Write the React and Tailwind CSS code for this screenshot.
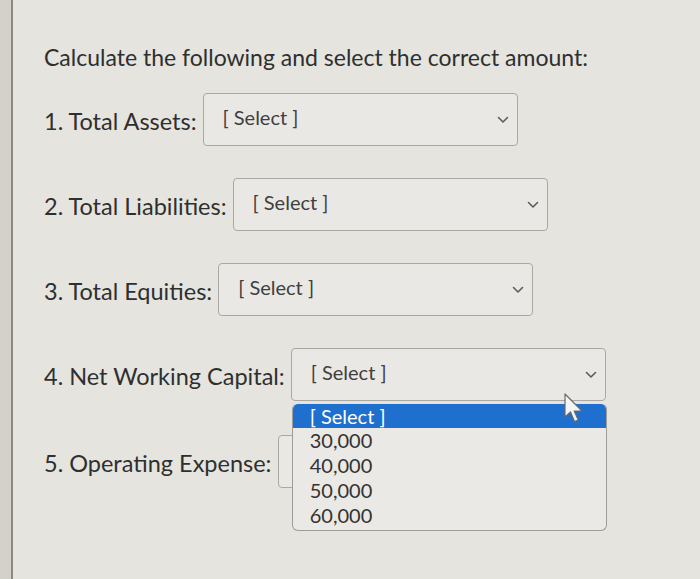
import React from "react";

const Chevron = () => (
  <svg width="12" height="8" viewBox="0 0 12 8" className="shrink-0">
    <path d="M1.5 1.5 L6 6 L10.5 1.5" fill="none" stroke="#5d5d5d" strokeWidth="1.6" strokeLinecap="round" strokeLinejoin="round" />
  </svg>
);

const SelectBox = ({ showText = true }) => (
  <div className="flex h-[53px] w-[315px] items-center justify-between rounded-[4px] border border-[#a9a8a3] bg-[#e9e8e4] pl-[19px] pr-[8px]">
    <span className="-mt-[5px] text-[20px] text-[#3f3f3f]">{showText ? "[ Select ]" : ""}</span>
    <Chevron />
  </div>
);

const Row = ({ label, children }) => (
  <div className="flex h-[53px] items-center">
    <span className="mt-[4px] text-[23.5px] text-[#2f2f2f]">{label}</span>
    <div className="relative ml-[6px]">{children}</div>
  </div>
);

export default function App() {
  return (
    <div
      className="flex h-[579px] w-[700px] overflow-hidden bg-[#e5e4df]"
      style={{ fontFamily: "Lato, 'Open Sans', sans-serif" }}
    >
      <div className="w-[11px] shrink-0 bg-[#d3d1ca]" />
      <div className="w-[2px] shrink-0 bg-[#898883]" />
      <div className="flex flex-col pl-[31px] pt-[43px]">
        <h1 className="text-[23px] leading-[28px] text-[#2f2f2f]">
          Calculate the following and select the correct amount:
        </h1>
        <div className="mt-[22px] flex flex-col gap-[32px]">
          <Row label="1. Total Assets:">
            <SelectBox />
          </Row>
          <Row label="2. Total Liabilities:">
            <SelectBox />
          </Row>
          <Row label="3. Total Equities:">
            <SelectBox />
          </Row>
          <Row label="4. Net Working Capital:">
            <SelectBox />
            <div className="absolute left-[1px] top-[56px] z-10 w-[315px] overflow-hidden rounded-t-[5px] rounded-b-[6px] border border-t-0 border-[#9e9d98] bg-[#eae9e5] pb-[2px] text-[20px] leading-[25px] text-[#333]">
              <div className="h-[24px] rounded-t-[5px] bg-[#1f6fce] pl-[17px] leading-[24px] text-white">[ Select ]</div>
              <div className="pl-[17px]">30,000</div>
              <div className="pl-[17px]">40,000</div>
              <div className="pl-[17px]">50,000</div>
              <div className="pl-[17px]">60,000</div>
            </div>
            <svg className="absolute left-[272px] top-[44px] z-20" width="22" height="34" viewBox="0 0 22 34">
              <path d="M2 2 L2 25 L7.5 20 L11.5 29.5 L15.2 28 L11.2 19 L19 19 Z" fill="#f4f4f4" stroke="#6a6a6a" strokeWidth="1.2" strokeLinejoin="round" />
            </svg>
          </Row>
          <div className="mt-[2px]">
            <Row label="5. Operating Expense:">
              <SelectBox showText={false} />
            </Row>
          </div>
        </div>
      </div>
    </div>
  );
}
